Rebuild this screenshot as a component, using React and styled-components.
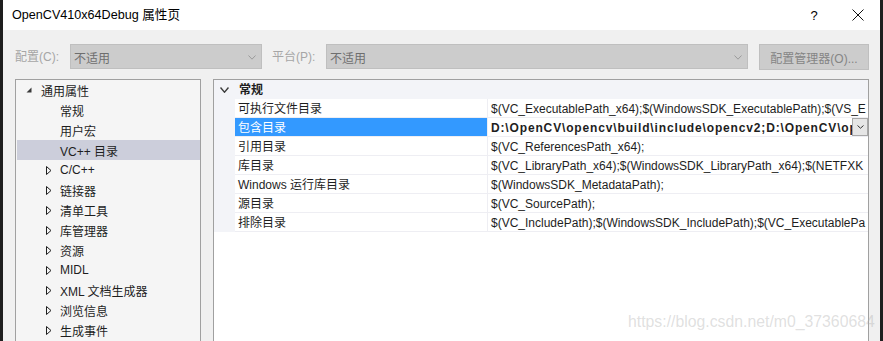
import React from "react";
import styled, { createGlobalStyle } from "styled-components";

const GlobalStyle = createGlobalStyle`
  html, body { margin: 0; padding: 0; background: #1e1e1e; }
  body {
    font-family: "Liberation Sans", "Noto Sans CJK SC", sans-serif;
    font-size: 12px;
    color: #1e1e1e;
  }
  * { box-sizing: border-box; }
`;

const Page = styled.div`
  display: flex;
  height: 341px;
  overflow: hidden;
  padding-left: 3px;
`;

const Window = styled.div`
  position: relative;
  width: 877px;
  height: 341px;
  background: #f0f0f0;
  display: flex;
  flex-direction: column;
  overflow: hidden;
`;

const TitleBar = styled.div`
  height: 30px;
  flex: none;
  background: #ffffff;
  display: flex;
  align-items: center;
  padding-left: 9px;
`;

const Title = styled.div`
  flex: 1;
  font-size: 12.6px;
  line-height: 30px;
  color: #000;
`;

const TitleButton = styled.div`
  width: 44px;
  height: 30px;
  display: flex;
  align-items: center;
  justify-content: center;
  font-size: 13px;
  color: #000;
`;

const Body = styled.div`
  flex: 1;
  display: flex;
  flex-direction: column;
  padding: 14px 11px 0 12px;
  min-height: 0;
`;

const Toolbar = styled.div`
  display: flex;
  align-items: flex-start;
  height: 26px;
  flex: none;
`;

const Label = styled.div`
  width: ${(p) => p.$w}px;
  margin-left: ${(p) => p.$ml || 0}px;
  height: 25px;
  line-height: 26px;
  color: #a6a6a6;
  white-space: nowrap;
`;

const Combo = styled.div`
  width: ${(p) => p.$w}px;
  height: 25px;
  background: #cccccc;
  border: 1px solid #bfbfbf;
  display: flex;
  align-items: center;
  padding: 1px 5px 0 3px;
  color: #6e6e6e;
`;

const ComboText = styled.span`
  flex: 1;
`;

const Button = styled.div`
  margin-left: auto;
  width: 110px;
  height: 26px;
  background: #cccccc;
  border: 1px solid #bfbfbf;
  display: flex;
  align-items: center;
  justify-content: center;
  padding-top: 1px;
  color: #858585;
  white-space: nowrap;
`;

const Panels = styled.div`
  flex: 1;
  display: flex;
  gap: 12px;
  margin-top: 9px;
  min-height: 0;
`;

const Tree = styled.div`
  width: 186px;
  flex: none;
  background: #f5f5f5;
  border: 1px solid #a0a0a0;
  border-bottom: none;
  padding-left: 1px;
  overflow: hidden;
`;

const TreeRow = styled.div`
  height: 20px;
  display: flex;
  align-items: center;
  padding-left: ${(p) => (p.$level ? 29 : 9)}px;
  background: ${(p) => (p.$selected ? "#cccedb" : "transparent")};
  white-space: nowrap;
`;

const Expander = styled.span`
  width: ${(p) => (p.$level ? 14 : 15)}px;
  flex: none;
  display: flex;
  align-items: center;
`;

const Grid = styled.div`
  flex: 1;
  background: #ffffff;
  border: 1px solid #a0a0a0;
  border-bottom: none;
  overflow: hidden;
`;

const Row = styled.div`
  display: grid;
  grid-template-columns: 21px 253px minmax(0, 1fr);
  height: 19px;
`;

const Margin = styled.div`
  background: #f3f4f8;
  display: flex;
  align-items: center;
  padding: 1px 0 0 6px;
`;

const HeaderCell = styled.div`
  grid-column: 2 / 4;
  background: #f3f4f8;
  font-weight: bold;
  padding-left: 4px;
  line-height: 20px;
  overflow: hidden;
`;

const NameCell = styled.div`
  padding-left: 3px;
  line-height: 20px;
  border-bottom: 1px solid #eeeef3;
  border-right: 1px solid #eeeef3;
  background: ${(p) => (p.$selected ? "#3399ff" : "#ffffff")};
  color: ${(p) => (p.$selected ? "#ffffff" : "#1e1e1e")};
  white-space: nowrap;
  overflow: hidden;
`;

const ValueCell = styled.div`
  display: flex;
  align-items: flex-start;
  border-bottom: 1px solid #eeeef3;
  min-width: 0;
  overflow: hidden;
`;

const ValueText = styled.span`
  flex: 1;
  min-width: 0;
  height: 18px;
  padding-left: 3px;
  line-height: 20px;
  white-space: nowrap;
  overflow: hidden;
  font-weight: ${(p) => (p.$bold ? "bold" : "normal")};
  letter-spacing: ${(p) => (p.$bold ? "0.85px" : "0")};
  color: #1e1e1e;
`;

const DropButton = styled.div`
  flex: none;
  width: 16px;
  height: 18px;
  background: #e6e6e6;
  border: 1px solid #a8a8a8;
  display: flex;
  align-items: center;
  justify-content: center;
`;

const Watermark = styled.div`
  position: absolute;
  left: 625px;
  top: 313px;
  font-size: 15.8px;
  line-height: 18px;
  color: rgba(175, 175, 175, 0.4);
  white-space: nowrap;
  pointer-events: none;
`;

const Chevron = ({ color = "#9a9a9a", w = 8, h = 5, sw = 1 }) => (
  <svg width={w} height={h} viewBox={`0 0 ${w} ${h}`}>
    <polyline
      points={`0.5,0.5 ${w / 2},${h - 0.8} ${w - 0.5},0.5`}
      fill="none"
      stroke={color}
      strokeWidth={sw}
    />
  </svg>
);

const Expanded = () => (
  <svg width="6" height="6" viewBox="0 0 6 6">
    <polygon points="5.5,0.5 5.5,5.5 0.5,5.5" fill="#3a3a3a" />
  </svg>
);

const Collapsed = () => (
  <svg width="6" height="9" viewBox="0 0 6 9">
    <polygon points="0.5,0.5 5,4.5 0.5,8.5" fill="none" stroke="#1e1e1e" strokeWidth="1" />
  </svg>
);

const CloseIcon = () => (
  <svg width="12" height="12" viewBox="0 0 12 12">
    <path d="M0.5 0.5 L11.5 11.5 M11.5 0.5 L0.5 11.5" stroke="#111" strokeWidth="1" />
  </svg>
);

const tree = [
  { label: "通用属性", level: 0, exp: "open" },
  { label: "常规", level: 1 },
  { label: "用户宏", level: 1 },
  { label: "VC++ 目录", level: 1, selected: true },
  { label: "C/C++", level: 1, exp: "closed" },
  { label: "链接器", level: 1, exp: "closed" },
  { label: "清单工具", level: 1, exp: "closed" },
  { label: "库管理器", level: 1, exp: "closed" },
  { label: "资源", level: 1, exp: "closed" },
  { label: "MIDL", level: 1, exp: "closed" },
  { label: "XML 文档生成器", level: 1, exp: "closed" },
  { label: "浏览信息", level: 1, exp: "closed" },
  { label: "生成事件", level: 1, exp: "closed" },
];

const rows = [
  { name: "可执行文件目录", value: "$(VC_ExecutablePath_x64);$(WindowsSDK_ExecutablePath);$(VS_E" },
  { name: "包含目录", value: "D:\\OpenCV\\opencv\\build\\include\\opencv2;D:\\OpenCV\\op", selected: true },
  { name: "引用目录", value: "$(VC_ReferencesPath_x64);" },
  { name: "库目录", value: "$(VC_LibraryPath_x64);$(WindowsSDK_LibraryPath_x64);$(NETFXK" },
  { name: "Windows 运行库目录", value: "$(WindowsSDK_MetadataPath);" },
  { name: "源目录", value: "$(VC_SourcePath);" },
  { name: "排除目录", value: "$(VC_IncludePath);$(WindowsSDK_IncludePath);$(VC_ExecutablePa" },
];

export default function App() {
  return (
    <>
      <GlobalStyle />
      <Page>
        <Window>
          <TitleBar>
            <Title>OpenCV410x64Debug 属性页</Title>
            <TitleButton>?</TitleButton>
            <TitleButton>
              <CloseIcon />
            </TitleButton>
          </TitleBar>
          <Body>
            <Toolbar>
              <Label $w={55}>配置(C):</Label>
              <Combo $w={192}>
                <ComboText>不适用</ComboText>
                <Chevron />
              </Combo>
              <Label $w={54} $ml={10}>平台(P):</Label>
              <Combo $w={422}>
                <ComboText>不适用</ComboText>
                <Chevron />
              </Combo>
              <Button>配置管理器(O)...</Button>
            </Toolbar>
            <Panels>
              <Tree>
                {tree.map((t) => (
                  <TreeRow key={t.label} $level={t.level} $selected={t.selected}>
                    <Expander $level={t.level}>
                      {t.exp === "open" && <Expanded />}
                      {t.exp === "closed" && <Collapsed />}
                    </Expander>
                    {t.label}
                  </TreeRow>
                ))}
              </Tree>
              <Grid>
                <Row>
                  <Margin>
                    <Chevron color="#3c3c3c" w={9} h={6} sw={1.4} />
                  </Margin>
                  <HeaderCell>常规</HeaderCell>
                </Row>
                {rows.map((r) => (
                  <Row key={r.name}>
                    <Margin />
                    <NameCell $selected={r.selected}>{r.name}</NameCell>
                    <ValueCell>
                      <ValueText $bold={r.selected}>{r.value}</ValueText>
                      {r.selected && (
                        <DropButton>
                          <Chevron color="#333" w={7} h={4} sw={1} />
                        </DropButton>
                      )}
                    </ValueCell>
                  </Row>
                ))}
              </Grid>
            </Panels>
          </Body>
          <Watermark>https://blog.csdn.net/m0_37360684</Watermark>
        </Window>
      </Page>
    </>
  );
}
